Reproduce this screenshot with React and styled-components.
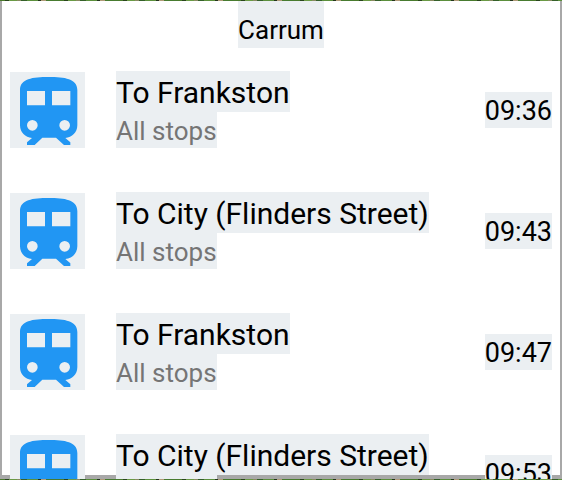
import React from 'react';
import styled, { createGlobalStyle } from 'styled-components';

const GlobalStyle = createGlobalStyle`
  * { box-sizing: border-box; }
  body { margin: 0; background: #fff; font-family: Roboto, sans-serif; }
`;

const Screen = styled.div`
  height: 100vh;
  padding: 1px 0;
  background: repeating-linear-gradient(90deg,
    #4a7a2c 0 5px, #29451c 5px 9px, #6a9a45 9px 17px, #8a8a62 17px 21px,
    #35602a 21px 27px, #5b8f3c 27px 38px, #23351c 38px 41px, #b09a78 41px 46px, #477b30 46px 59px);
`;

const Card = styled.main`
  height: 100%;
  overflow: hidden;
  background: #fff;
  box-shadow: inset 2px 0 #a8a8a8, inset -2px 0 #a8a8a8, inset 0 -4px #a8a8a8;
`;

const Header = styled.header`
  display: flex;
  justify-content: center;
`;

const Station = styled.h1`
  margin: 0;
  padding-top: 12px;
  background: #ebeff2;
  color: #000;
  font-size: 26px;
  font-weight: 400;
  line-height: 35px;
`;

const Departures = styled.ul`
  margin: 0;
  padding: 23px 10px 0;
  list-style: none;
`;

const Departure = styled.li`
  display: grid;
  grid-template-columns: 75px 1fr auto;
  column-gap: 31px;
  align-items: start;
  height: 121px;
`;

const TrainIcon = styled.svg`
  display: block;
  width: 75px;
  height: 76px;
  margin-top: 1px;
  background: #ebeff2;
`;

const Details = styled.div`
  display: flex;
  flex-direction: column;
  align-items: flex-start;
`;

const Destination = styled.h2`
  margin: 0;
  padding-top: 2px;
  background: #ebeff2;
  color: #000;
  font-size: 30px;
  font-weight: 400;
  line-height: 39px;
  white-space: nowrap;
`;

const Service = styled.p`
  margin: 0;
  padding-top: 2px;
  background: #ebeff2;
  color: #757575;
  font-size: 26px;
  line-height: 34px;
`;

const Time = styled.time`
  margin-top: 21px;
  padding-top: 2px;
  background: #ebeff2;
  color: #000;
  font-size: 27px;
  line-height: 34px;
`;

const departures = [
  { to: 'To Frankston', time: '09:36' },
  { to: 'To City (Flinders Street)', time: '09:43' },
  { to: 'To Frankston', time: '09:47' },
  { to: 'To City (Flinders Street)', time: '09:53' },
];

function Train() {
  return (
    <TrainIcon viewBox="0 0 225 228" role="img" aria-label="Train">
      <path
        fill="#2196f3"
        fillRule="evenodd"
        d="M116 15C68 15 30 20 30 54V160C30 181 46 197 66 198L51 211V219H74L97 197H138L162 219H181V211L166 198C186 197 202 181 202 160V54C202 20 164 15 116 15ZM51 57H105V100H51ZM126 57H181V100H126ZM67 144a16 16 0 1 0 0 32a16 16 0 1 0 0-32ZM164 144a16 16 0 1 0 0 32a16 16 0 1 0 0-32Z"
      />
    </TrainIcon>
  );
}

export default function App() {
  return (
    <Screen>
      <GlobalStyle />
      <Card>
        <Header>
          <Station>Carrum</Station>
        </Header>
        <Departures>
          {departures.map((d) => (
            <Departure key={d.time}>
              <Train />
              <Details>
                <Destination>{d.to}</Destination>
                <Service>All stops</Service>
              </Details>
              <Time dateTime={d.time}>{d.time}</Time>
            </Departure>
          ))}
        </Departures>
      </Card>
    </Screen>
  );
}
